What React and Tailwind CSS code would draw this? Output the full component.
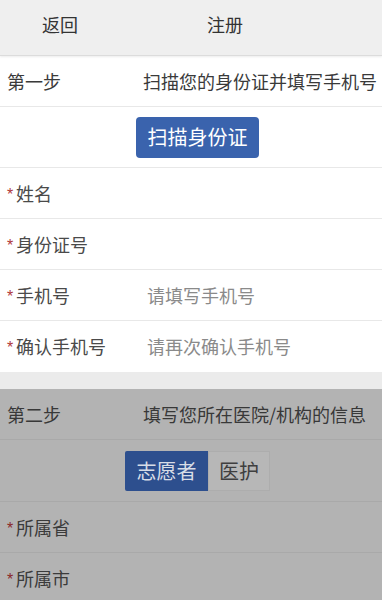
import React from "react";

const font = { fontFamily: '"Noto Sans CJK SC", "Noto Sans", sans-serif' };

const Star = ({ dim }) => (
  <span
    className={`w-[9px] text-[16px] leading-none mt-[3px] ${dim ? "text-[#8a2a2a]" : "text-[#b03a3a]"}`}
    style={{ fontFamily: '"Liberation Sans", sans-serif' }}
  >
    *
  </span>
);

const Field = ({ label, placeholder, dim, last }) => (
  <div
    className={`flex items-center h-[51px] ${last ? "" : "border-b"} ${
      dim ? "border-[#a9a9a9] text-[#3b3b3b]" : "border-[#e8e8e8] text-[#4a4a4a]"
    }`}
  >
    <div className="w-[143px] flex items-center pl-[7px] text-[18px]">
      <Star dim={dim} />
      {label}
    </div>
    {placeholder && <div className="pl-[4px] text-[18px] text-[#8a8a8a]">{placeholder}</div>}
  </div>
);

const StepRow = ({ step, desc, dim }) => (
  <div
    className={`flex items-center h-[51px] border-b text-[18px] ${
      dim ? "border-[#a9a9a9] text-[#383838]" : "border-[#e8e8e8] text-[#3a3a3a]"
    }`}
  >
    <div className="w-[143px] pl-[7px]">{step}</div>
    <div className="whitespace-nowrap">{desc}</div>
  </div>
);

export default function App() {
  return (
    <div className="w-[382px] h-[600px] overflow-hidden bg-white" style={font}>
      <div className="flex items-center h-[56px] pb-[6px] bg-[#efefef] border-b border-[#dcdcdc] shadow-[0_1px_2px_rgba(0,0,0,0.08)] text-[18px] text-[#333]">
        <div className="w-[120px] text-center">返回</div>
        <div className="w-[210px] text-center">注册</div>
      </div>

      <StepRow step="第一步" desc="扫描您的身份证并填写手机号" />
      <div className="flex items-center justify-center h-[61px] border-b border-[#e8e8e8]">
        <button className="w-[123px] h-[41px] rounded-[4px] bg-[#3a63ad] text-white text-[20px] ml-[13px]">
          扫描身份证
        </button>
      </div>
      <Field label="姓名" />
      <Field label="身份证号" />
      <Field label="手机号" placeholder="请填写手机号" />
      <Field label="确认手机号" placeholder="请再次确认手机号" last />
      <div className="h-[17px] bg-[#ebebeb]" />

      <div className="bg-[#b3b3b3]">
        <StepRow step="第二步" desc="填写您所在医院/机构的信息" dim />
        <div className="flex items-center justify-center h-[62px] border-b border-[#a9a9a9]">
          <div className="flex ml-[13px]">
            <div className="w-[83px] h-[40px] flex items-center justify-center bg-[#2d4f8e] text-[#d8dde6] text-[20px] rounded-l-[2px]">
              志愿者
            </div>
            <div className="w-[62px] h-[40px] flex items-center justify-center bg-[#b7b7b7] border border-[#adadad] text-[#3f3f3f] text-[20px]">
              医护
            </div>
          </div>
        </div>
        <Field label="所属省" dim />
        <Field label="所属市" dim />
      </div>
    </div>
  );
}
